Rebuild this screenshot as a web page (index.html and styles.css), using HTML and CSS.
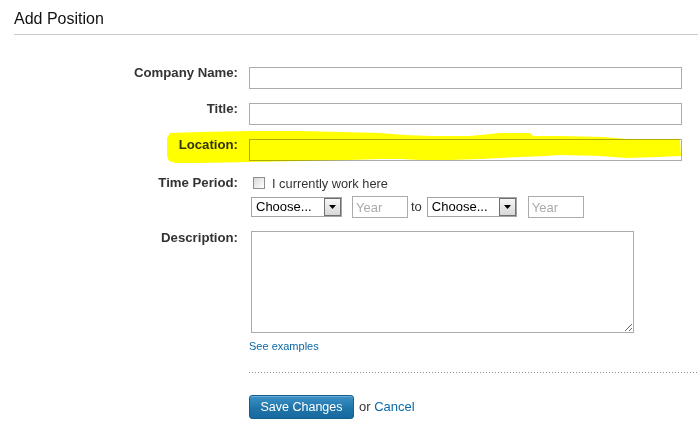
FILE: index.html
```html
<!DOCTYPE html>
<html>
<head>
<meta charset="utf-8">
<link rel="stylesheet" href="styles.css">
</head>
<body>
<div class="page">
  <header class="head"><h1>Add Position</h1></header>
  <form class="form">
    <div class="row"><label class="lbl">Company Name:</label><input class="txt wide" type="text"></div>
    <div class="row"><label class="lbl">Title:</label><input class="txt wide" type="text"></div>
    <div class="row row-loc"><label class="lbl">Location:</label><input class="txt wide" type="text"></div>
    <div class="row row-time">
      <label class="lbl">Time Period:</label>
      <div class="field">
        <div class="check-line"><span class="checkbox"></span><span class="check-text">I currently work here</span></div>
        <div class="dates">
          <div class="sel s1"><span class="sel-text">Choose...</span><span class="sel-btn"><svg width="7" height="4" viewBox="0 0 7 4"><path d="M0 0H7L3.5 4Z" fill="#000"/></svg></span></div>
          <input class="txt year y1" type="text" placeholder="Year">
          <span class="to">to</span>
          <div class="sel s2"><span class="sel-text">Choose...</span><span class="sel-btn"><svg width="7" height="4" viewBox="0 0 7 4"><path d="M0 0H7L3.5 4Z" fill="#000"/></svg></span></div>
          <input class="txt year y2" type="text" placeholder="Year">
        </div>
      </div>
    </div>
    <div class="row row-desc">
      <label class="lbl lbl-desc">Description:</label>
      <div class="field">
        <textarea class="desc"></textarea>
        <a class="link small" href="#">See examples</a>
      </div>
    </div>
    <div class="divider"></div>
    <div class="actions">
      <button class="btn" type="button">Save Changes</button>
      <span class="or">or <a class="link" href="#">Cancel</a></span>
    </div>
  </form>
  <svg class="highlight" width="698" height="429" viewBox="0 0 698 429">
    <path fill="#ffff00" d="M167,138 L170,133 L200,132 L250,131 L300,131 L340,132 L380,133 L405,135 L430,136 L470,136 L490,134 L500,133 L530,133 L533,136 L560,136 L603,137 L627,139 L680,139 L681,156 L657,157 L627,158 L600,156 L560,155 L545,156 L520,157 L480,159 L450,160 L420,160 L400,159 L380,159 L350,160 L300,161 L250,162 L200,163 L175,163 L169,161 L167,156 Z"/>
  </svg>
</div>
</body>
</html>
```
FILE: styles.css
```css
html, body {
  margin: 0;
  padding: 0;
  background: #fff;
}
body {
  font-family: "Liberation Sans", Arial, sans-serif;
  color: #333;
  overflow: hidden;
}
.page {
  position: relative;
  width: 698px;
  height: 429px;
}
.head {
  margin-left: 14px;
  padding-top: 9px;
  padding-bottom: 5px;
  border-bottom: 1px solid #cccccc;
}
.head h1 {
  margin: 0;
  font-size: 16px;
  line-height: 20px;
  font-weight: normal;
  color: #111;
}
.form {
  margin: 32px 0 0 0;
}
.row {
  display: flex;
  align-items: flex-start;
  margin-bottom: 14px;
}
.row-loc { margin-bottom: 16px; }
.row-time { margin-bottom: 13px; }
.row-desc { margin-bottom: 0; }
.lbl {
  flex: none;
  width: 238px;
  margin-right: 11px;
  margin-top: -2px;
  text-align: right;
  font-size: 13.2px;
  line-height: 15px;
  font-weight: bold;
  color: #333;
}
.lbl-desc { margin-top: -1px; }
.txt {
  box-sizing: border-box;
  height: 22px;
  border: 1px solid #ababab;
  border-radius: 0;
  padding: 2px 3px;
  margin: 0;
  font-family: "Liberation Sans", Arial, sans-serif;
  font-size: 13px;
  color: #000;
  background: #fff;
  outline: none;
}
.txt::placeholder { color: #aaaaaa; }
.wide { width: 433px; }
.field {
  display: flex;
  flex-direction: column;
  align-items: flex-start;
}
.check-line {
  display: flex;
  align-items: flex-start;
  height: 14px;
  margin-left: 4px;
}
.checkbox {
  box-sizing: border-box;
  width: 12px;
  height: 12px;
  border: 1px solid #8f8f8f;
  background: linear-gradient(135deg, #d6d6d6 0%, #f0f0f0 60%, #ffffff 100%);
}
.check-text {
  margin-left: 7px;
  font-size: 12.8px;
  line-height: 14px;
  color: #333;
}
.dates {
  display: flex;
  align-items: center;
  margin-top: 5px;
  height: 22px;
}
.sel {
  box-sizing: border-box;
  display: flex;
  align-items: center;
  height: 20px;
  border: 1px solid #a5a5a5;
  background: #fff;
  padding: 0 0 0 4px;
}
.s1 { width: 91px; margin-left: 2px; }
.s2 { width: 90px; }
.sel-text {
  flex: 1;
  font-size: 13px;
  line-height: 16px;
  color: #000;
}
.sel-btn {
  box-sizing: border-box;
  width: 17px;
  height: 18px;
  border: 1px solid #6f6f6f;
  background: linear-gradient(#f6f6f6, #d8d8d8);
  display: flex;
  align-items: center;
  justify-content: center;
}
.year { width: 56px; }
.y1 { margin-left: 10px; }
.y2 { margin-left: 11px; }
.to {
  margin: 0 5px 0 3px;
  font-size: 13px;
  line-height: 16px;
  color: #333;
}
.desc {
  box-sizing: border-box;
  display: block;
  width: 383px;
  height: 102px;
  margin: 0 0 0 2px;
  border: 1px solid #ababab;
  border-radius: 0;
  padding: 2px;
  font-family: "Liberation Sans", Arial, sans-serif;
  font-size: 13px;
  resize: both;
  outline: none;
}
.link {
  color: #0b68a8;
  text-decoration: none;
}
.small {
  display: block;
  margin-top: 7px;
  font-size: 11px;
  line-height: 13px;
}
.divider {
  margin: 19px 0 0 249px;
  height: 1px;
  background-image: linear-gradient(to right, #8a8a8a 1px, transparent 1px);
  background-size: 3px 1px;
  background-repeat: repeat-x;
}
.actions {
  display: flex;
  align-items: center;
  margin: 22px 0 0 249px;
}
.btn {
  box-sizing: border-box;
  width: 105px;
  height: 24px;
  margin: 0;
  padding: 0;
  border: 1px solid #175d8b;
  border-radius: 3px;
  background: linear-gradient(#3d93c8, #1f74a8 55%, #176aa0);
  color: #fff;
  font-family: "Liberation Sans", Arial, sans-serif;
  font-size: 12.5px;
  line-height: 20px;
  box-shadow: inset 0 1px 0 rgba(255,255,255,0.25);
}
.or {
  margin-left: 5px;
  margin-bottom: 2px;
  font-size: 13px;
  line-height: 15px;
  color: #333;
}
.highlight {
  position: absolute;
  left: 0;
  top: 0;
  pointer-events: none;
  mix-blend-mode: multiply;
}
```
